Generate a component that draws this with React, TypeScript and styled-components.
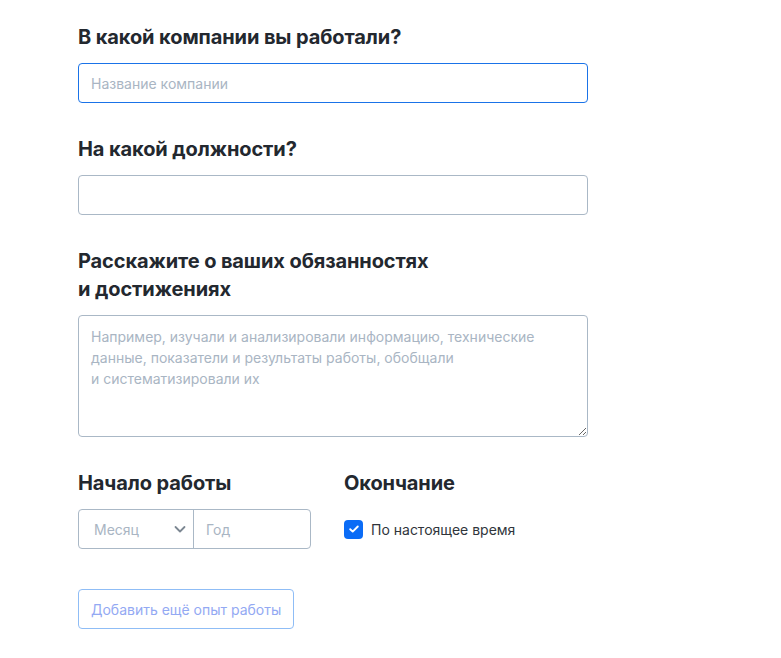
import React from "react";
import styled, { createGlobalStyle } from "styled-components";

const Global = createGlobalStyle`
  html, body { margin: 0; padding: 0; background: #fff; }
  body { font-family: Inter, "Noto Sans", sans-serif; color: #22272e; }
  * { box-sizing: border-box; }
`;

const Page = styled.div`
  padding: 23px 0 20px 78px;
  width: 588px;
`;

const Section = styled.div`
  display: flex;
  flex-direction: column;
  margin-bottom: 32px;
`;

const Heading = styled.h2`
  margin: 0 0 12px;
  font-size: 20px;
  font-weight: 700;
  line-height: 28px;
  color: #23282f;
  letter-spacing: -0.1px;
`;

const TextInput = styled.input<{ $focused?: boolean }>`
  width: 510px;
  height: 40px;
  padding: 0 12px;
  border: 1px solid ${(p) => (p.$focused ? "#1a73e8" : "#aab8c6")};
  border-radius: 4px;
  font-family: Inter, sans-serif;
  font-size: 14px;
  color: #22272e;
  outline: none;
  caret-color: #000;
  &::placeholder { color: #a9b5c3; }
`;

const TextArea = styled.textarea`
  width: 510px;
  height: 122px;
  padding: 10px 12px;
  border: 1px solid #aab8c6;
  border-radius: 4px;
  font-family: Inter, sans-serif;
  font-size: 14px;
  line-height: 21px;
  outline: none;
  resize: vertical;
  &::placeholder { color: #a9b5c3; }
`;

const Row = styled.div`
  display: grid;
  grid-template-columns: 233px auto;
  column-gap: 33px;
  margin-bottom: 40px;
`;

const Column = styled.div`
  display: flex;
  flex-direction: column;
`;

const DateGroup = styled.div`
  display: flex;
  height: 40px;
  border: 1px solid #aab8c6;
  border-radius: 4px;
`;

const MonthSelect = styled.div`
  width: 115px;
  display: flex;
  align-items: center;
  justify-content: space-between;
  padding: 0 5px 0 15px;
  border-right: 1px solid #aab8c6;
  font-size: 14px;
  color: #a9b5c3;
`;

const YearInput = styled.input`
  flex: 1;
  min-width: 0;
  border: none;
  background: transparent;
  padding: 0 12px;
  font-family: Inter, sans-serif;
  font-size: 14px;
  outline: none;
  &::placeholder { color: #a9b5c3; }
`;

const CheckRow = styled.label`
  height: 40px;
  display: flex;
  align-items: center;
  gap: 8px;
  font-size: 14px;
  color: #30353b;
`;

const CheckBox = styled.span`
  width: 19px;
  height: 19px;
  border-radius: 4px;
  background: #0b6cf6;
  display: flex;
  align-items: center;
  justify-content: center;
`;

const AddButton = styled.button`
  height: 40px;
  padding: 0 12px;
  border: 1px solid #8fbdf6;
  border-radius: 4px;
  background: #fff;
  font-family: Inter, sans-serif;
  font-size: 14px;
  color: #93a9f3;
  cursor: pointer;
`;

export default function App() {
  return (
    <>
      <Global />
      <Page>
        <Section>
          <Heading>В какой компании вы работали?</Heading>
          <TextInput $focused placeholder="Название компании" autoFocus />
        </Section>
        <Section>
          <Heading>На какой должности?</Heading>
          <TextInput />
        </Section>
        <Section>
          <Heading>
            Расскажите о ваших обязанностях
            <br />и достижениях
          </Heading>
          <TextArea
            placeholder={
              "Например, изучали и анализировали информацию, технические\nданные, показатели и результаты работы, обобщали\nи систематизировали их"
            }
          />
        </Section>
        <Row>
          <Column>
            <Heading>Начало работы</Heading>
            <DateGroup>
              <MonthSelect>
                Месяц
                <svg width="16" height="16" viewBox="0 0 16 16" fill="none">
                  <path d="M3.5 6l4.5 4.5L12.5 6" stroke="#7c8792" strokeWidth="1.8" strokeLinecap="round" strokeLinejoin="round" />
                </svg>
              </MonthSelect>
              <YearInput placeholder="Год" />
            </DateGroup>
          </Column>
          <Column>
            <Heading>Окончание</Heading>
            <CheckRow>
              <CheckBox>
                <svg width="12" height="12" viewBox="0 0 12 12" fill="none">
                  <path d="M2.2 6.2l2.5 2.4L9.8 3.5" stroke="#fff" strokeWidth="1.9" strokeLinecap="round" strokeLinejoin="round" />
                </svg>
              </CheckBox>
              По настоящее время
            </CheckRow>
          </Column>
        </Row>
        <AddButton>Добавить ещё опыт работы</AddButton>
      </Page>
    </>
  );
}
